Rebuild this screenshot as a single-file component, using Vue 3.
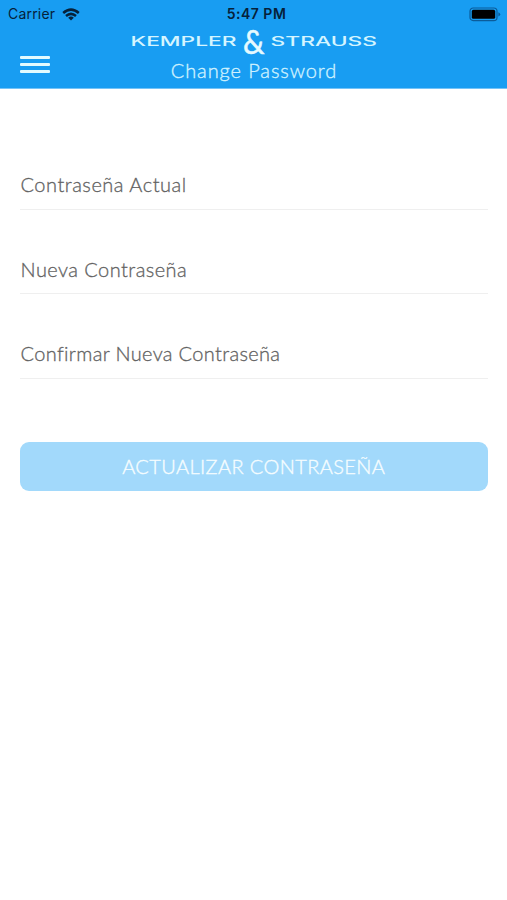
<script setup>
const fields = [
  { label: 'Contraseña Actual', cls: 'current' },
  { label: 'Nueva Contraseña', cls: 'next' },
  { label: 'Confirmar Nueva Contraseña', cls: 'confirm' },
]
</script>

<template>
  <div class="screen">
    <header class="header">
      <div class="status">
        <div class="carrier">
          <span>Carrier</span>
          <svg class="wifi" width="18" height="13" viewBox="0 0 18 13">
            <g fill="none" stroke="#06213a" stroke-width="2.5">
              <path d="M1.2 5 Q9 -1.8 16.8 5" />
              <path d="M4 8 Q9 3.7 14 8" />
            </g>
            <path d="M9 12.4 L6.2 9.7 Q9 7.5 11.8 9.7 Z" fill="#06213a" />
          </svg>
        </div>
        <span class="time">5:47 PM</span>
        <svg class="battery" width="32" height="15" viewBox="0 0 32 15">
          <rect x="1" y="1" width="27" height="12.6" rx="3.2" fill="none" stroke="#0b5c9a" stroke-width="1.2" />
          <rect x="2.8" y="2.8" width="23.4" height="9" rx="1.6" fill="#000" />
          <path d="M29.4 5.2 Q31.2 6 31.2 7.3 Q31.2 8.6 29.4 9.4 Z" fill="#0b5c9a" />
        </svg>
      </div>
      <div class="bar">
        <button class="menu" aria-label="Menu"><i></i><i></i><i></i></button>
        <div class="titles">
          <svg class="brand" width="248" height="30" viewBox="0 0 248 30">
            <text class="word" x="0.5" y="17.8" textLength="106" lengthAdjust="spacingAndGlyphs">KEMPLER</text>
            <text class="amp" x="113" y="26" textLength="21.5" lengthAdjust="spacingAndGlyphs">&amp;</text>
            <text class="word" x="140.5" y="17.8" textLength="106.5" lengthAdjust="spacingAndGlyphs">STRAUSS</text>
          </svg>
          <h1 class="title">Change Password</h1>
        </div>
      </div>
    </header>
    <main class="form">
      <div v-for="f in fields" :key="f.label" class="field" :class="f.cls">{{ f.label }}</div>
      <button class="submit">ACTUALIZAR CONTRASEÑA</button>
    </main>
  </div>
</template>

<style>
body { margin: 0; background: #fff; }
</style>

<style scoped>
.screen { width: 507px; height: 900px; background: #fff; overflow: hidden; font-family: Lato, "Open Sans", sans-serif; }
.header { box-sizing: border-box; height: 89px; background: #189df2; border-bottom: 1px solid #74c3f8; }
.status { height: 28px; padding: 0 6px 0 8px; display: grid; grid-template-columns: 1fr auto 1fr; align-items: center; font-family: Inter, sans-serif; font-size: 14px; line-height: 28px; color: #06213a; }
.carrier { display: flex; align-items: center; gap: 7px; letter-spacing: 0.2px; }
.time { padding-left: 4px; font-weight: 600; letter-spacing: 0.5px; }
.battery { justify-self: end; }
.bar { height: 60px; display: grid; grid-template-columns: 130px 248px 1fr; }
.menu { display: flex; flex-direction: column; gap: 4.5px; align-self: start; margin: 28px 0 0 20px; width: 30px; padding: 0; border: 0; background: none; }
.menu i { display: block; height: 2.7px; border-radius: 1px; background: #e2fbff; }
.titles { display: flex; flex-direction: column; align-items: center; }
.brand { display: block; overflow: visible; }
.word { font-family: Inter, sans-serif; font-size: 12.6px; font-weight: 500; fill: #d5f5ff; }
.amp { font-family: Lato, sans-serif; font-size: 32px; fill: #e6faff; stroke: #e6faff; stroke-width: 0.5px; }
.title { margin: 0; font-size: 20px; line-height: 24px; font-weight: 300; letter-spacing: 0.9px; color: #d0f2ff; white-space: nowrap; -webkit-text-stroke: 0.35px; }
.form { padding: 73px 19.5px 0 20px; }
.field { box-sizing: border-box; height: 47.7px; margin-bottom: 37px; padding-left: 0.5px; border-bottom: 1.5px solid #efefef; font-size: 20px; line-height: 44px; font-weight: 300; color: #626262; -webkit-text-stroke: 0.3px; }
.current { letter-spacing: 0.52px; }
.next { letter-spacing: 0.45px; }
.confirm { letter-spacing: 0.34px; }
.submit { display: block; width: 100%; height: 49px; margin-top: 63px; padding: 0 0 2px; border: 0; border-radius: 9px; background: #a2d9fb; color: #f6fdff; font-family: inherit; font-size: 20px; font-weight: 300; letter-spacing: 0.4px; -webkit-text-stroke: 0.35px; }
</style>
